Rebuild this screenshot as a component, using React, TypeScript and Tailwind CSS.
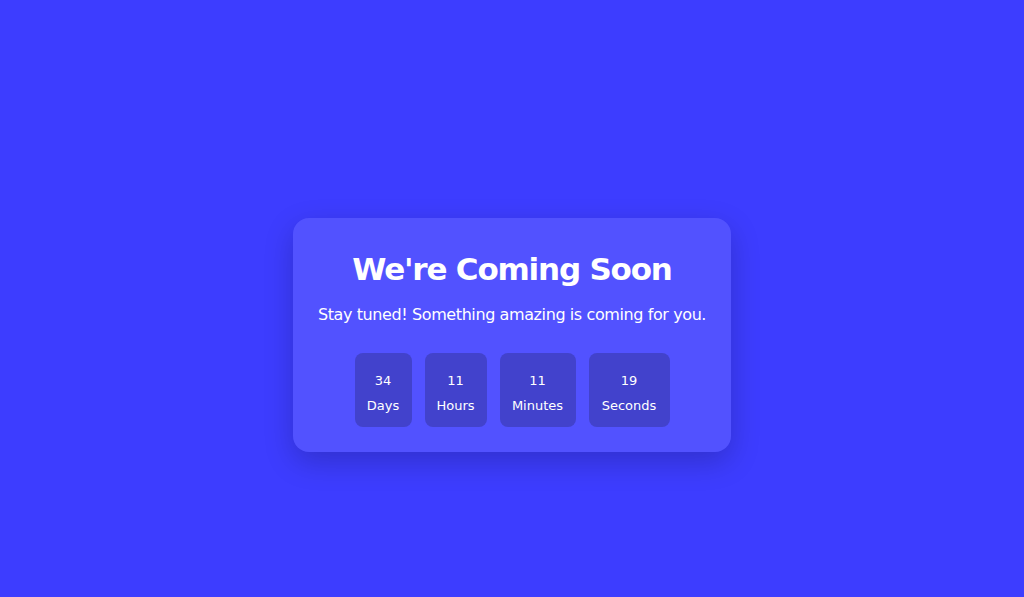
import React from "react";

const units = [
  { value: "34", label: "Days", className: "w-[57px]" },
  { value: "11", label: "Hours", className: "w-[62px]" },
  { value: "11", label: "Minutes", className: "w-[76px]" },
  { value: "19", label: "Seconds", className: "w-[81px]" },
];

const App: React.FC = () => {
  return (
    <div
      className="flex h-[597px] w-full items-center justify-center bg-[#3d3dff]"
      style={{ fontFamily: "'DejaVu Sans', 'Noto Sans', sans-serif" }}
    >
      <div className="mt-[73px] flex h-[234px] w-[438px] flex-col items-center rounded-2xl bg-[#5252ff] pt-[29px] text-white shadow-[0_10px_30px_rgba(0,0,0,0.2)]">
        <h1 className="text-[31px] leading-[44px] font-bold tracking-[-1.2px]">
          We're Coming Soon
        </h1>
        <p className="mt-[12px] text-[16px] leading-6 tracking-[-0.4px]">
          Stay tuned! Something amazing is coming for you.
        </p>
        <div className="mt-[26px] flex gap-[13px]">
          {units.map((u) => (
            <div
              key={u.label}
              className={`flex h-[74px] flex-col items-center rounded-lg bg-[#4242cc] pt-[15px] ${u.className}`}
            >
              <span className="text-[13px] leading-[25px]">{u.value}</span>
              <span className="text-[13px] leading-[25px]">{u.label}</span>
            </div>
          ))}
        </div>
      </div>
    </div>
  );
};

export default App;
